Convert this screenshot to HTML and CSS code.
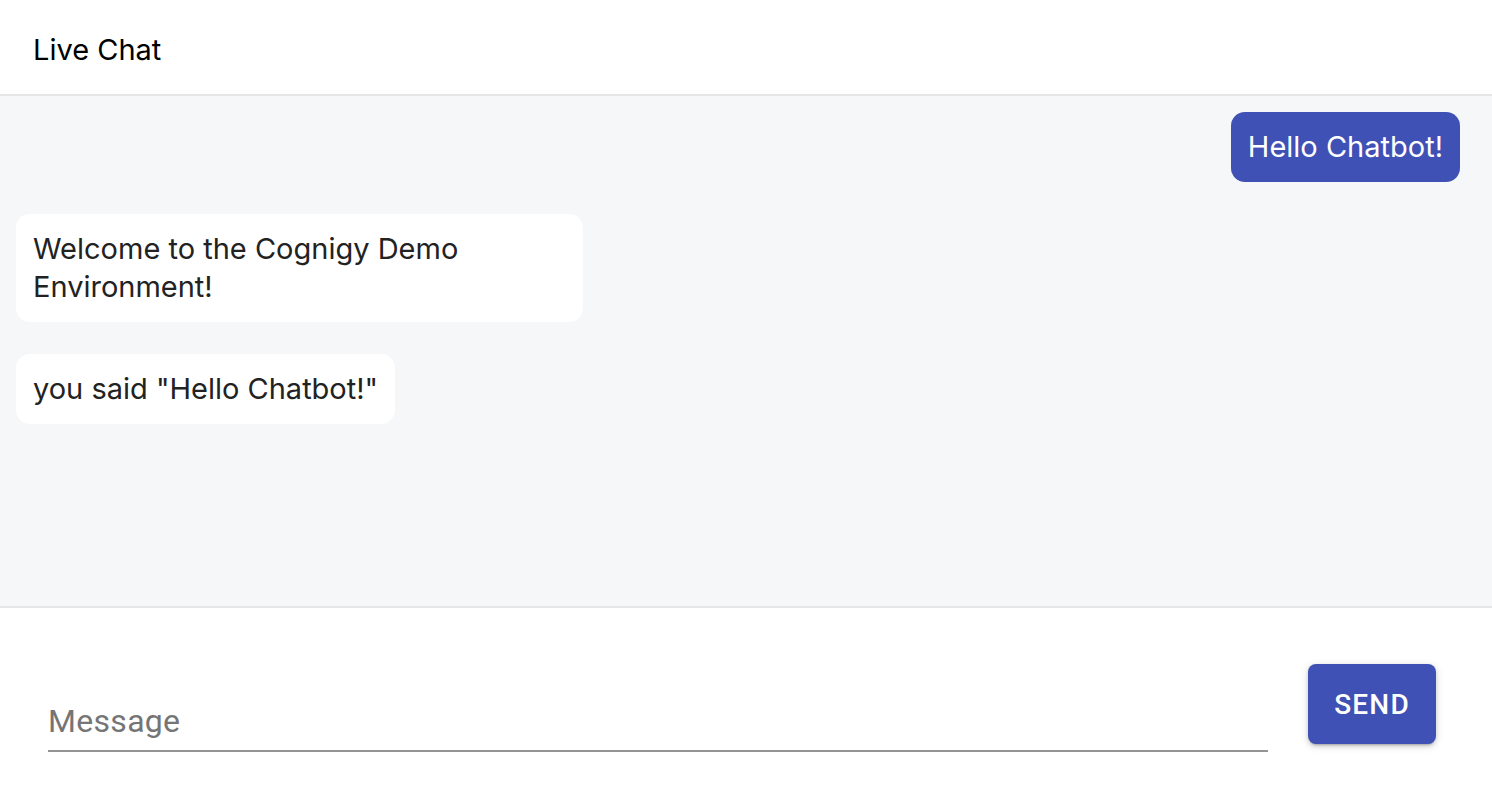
FILE: index.html
```html
<!DOCTYPE html>
<html lang="en">
<head>
<meta charset="utf-8">
<title>Live Chat</title>
<link rel="stylesheet" href="styles.css">
</head>
<body>
<div class="app">
  <header class="header">
    <h1 class="title">Live Chat</h1>
  </header>
  <main class="messages">
    <div class="row row-user">
      <div class="bubble bubble-user">Hello Chatbot!</div>
    </div>
    <div class="row row-bot">
      <div class="bubble bubble-bot">Welcome to the Cognigy Demo Environment!</div>
    </div>
    <div class="row row-bot">
      <div class="bubble bubble-bot">you said "Hello Chatbot!"</div>
    </div>
  </main>
  <form class="composer" onsubmit="return false;">
    <div class="field">
      <input class="input" type="text" placeholder="Message">
    </div>
    <button class="send" type="submit">Send</button>
  </form>
</div>
</body>
</html>
```

FILE: styles.css
```css
* {
  box-sizing: border-box;
}

html, body {
  margin: 0;
  padding: 0;
  height: 100%;
  background: #ffffff;
}

body {
  font-family: Inter, "Noto Sans", sans-serif;
}

.app {
  display: flex;
  flex-direction: column;
  height: 800px;
}

.header {
  height: 96px;
  flex: none;
  display: flex;
  align-items: center;
  padding: 4px 33px 0;
  border-bottom: 2px solid #e6e6e6;
  background: #ffffff;
}

.title {
  margin: 0;
  font-size: 29px;
  font-weight: 400;
  color: #000000;
  letter-spacing: 0;
}

.messages {
  height: 512px;
  flex: none;
  background: #f6f7f9;
  border-bottom: 2px solid #e6e6e6;
  padding: 16px 32px 16px 16px;
  display: flex;
  flex-direction: column;
  gap: 32px;
}

.row {
  display: flex;
}

.row-user {
  justify-content: flex-end;
}

.row-bot {
  justify-content: flex-start;
}

.bubble {
  font-size: 29px;
  line-height: 38px;
  padding: 16px 17px;
  border-radius: 14px;
}

.bubble-user {
  background: #3f51b5;
  color: #ffffff;
}

.bubble-bot {
  background: #ffffff;
  color: #222222;
  max-width: 567px;
}

.composer {
  flex: 1;
  display: flex;
  align-items: flex-end;
  gap: 40px;
  padding: 0 56px 48px 48px;
}

.field {
  flex: 1;
  border-bottom: 2px solid #949494;
}

.input {
  display: block;
  width: 100%;
  border: 0;
  outline: none;
  background: transparent;
  font-family: Roboto, "Liberation Sans", sans-serif;
  font-size: 32px;
  letter-spacing: 0.3px;
  line-height: 38px;
  height: 54px;
  padding: 6px 0 10px;
  color: #222222;
}

.input::placeholder {
  color: #757575;
  opacity: 1;
}

.send {
  flex: none;
  width: 128px;
  height: 80px;
  margin-bottom: 8px;
  border: 0;
  border-radius: 8px;
  background: #3f51b5;
  color: #ffffff;
  font-family: Roboto, "Liberation Sans", sans-serif;
  font-weight: 500;
  font-size: 28px;
  letter-spacing: 1.2px;
  text-transform: uppercase;
  box-shadow: 0 3px 2px -2px rgba(0,0,0,0.2), 0 2px 4px 0 rgba(0,0,0,0.14), 0 2px 10px 0 rgba(0,0,0,0.12);
  cursor: pointer;
}
```
